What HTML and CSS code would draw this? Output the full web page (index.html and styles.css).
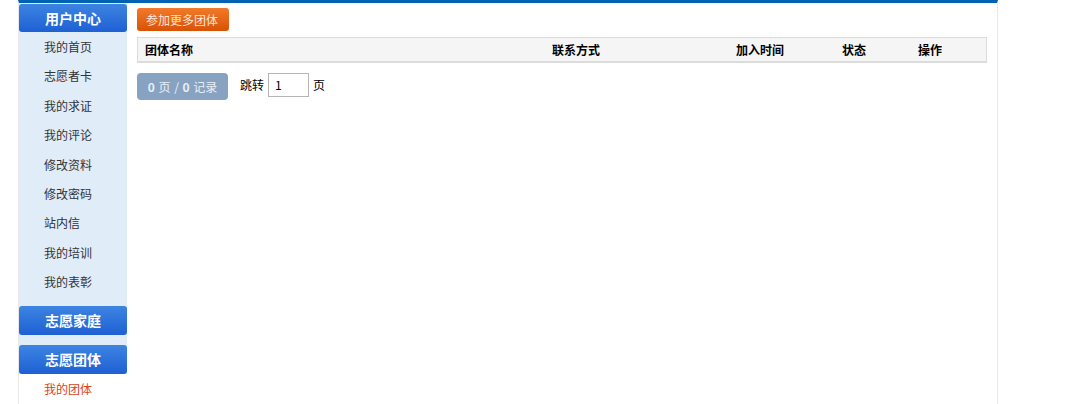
FILE: index.html
```html
<!DOCTYPE html>
<html lang="zh">
<head>
<meta charset="utf-8">
<title>我的团体</title>
<link rel="stylesheet" href="styles.css">
</head>
<body>
<div class="wrap">
  <aside class="side">
    <div class="group">
      <div class="ghead">用户中心</div>
      <ul class="glist">
        <li>我的首页</li>
        <li>志愿者卡</li>
        <li>我的求证</li>
        <li>我的评论</li>
        <li>修改资料</li>
        <li>修改密码</li>
        <li>站内信</li>
        <li>我的培训</li>
        <li>我的表彰</li>
      </ul>
    </div>
    <div class="group">
      <div class="ghead tall">志愿家庭</div>
    </div>
    <div class="group">
      <div class="ghead tall">志愿团体</div>
    </div>
    <ul class="glist white">
      <li class="on">我的团体</li>
    </ul>
  </aside>
  <main class="main">
    <div class="toolbar"><span class="btn">参加更多团体</span></div>
    <div class="thead">
      <div class="c">团体名称</div>
      <div class="c">联系方式</div>
      <div class="c">加入时间</div>
      <div class="c">状态</div>
      <div class="c">操作</div>
    </div>
    <div class="pager">
      <span class="count"><b>0</b> 页 / <b>0</b> 记录</span>
      <span class="jump">跳转</span>
      <span class="inp">1</span>
      <span class="jump">页</span>
    </div>
  </main>
</div>
</body>
</html>
```

FILE: styles.css
```css
html, body {
  margin: 0;
  padding: 0;
  background: #fff;
  font-family: "Noto Sans CJK SC", "Noto Sans", sans-serif;
  font-size: 12px;
  color: #333;
}
.wrap {
  margin-left: 18px;
  width: 978px;
  min-height: 404px;
  border-top: 3px solid #0062b2;
  border-left: 1px solid #e8e8e8;
  border-right: 1px solid #e8e8e8;
  display: flex;
  align-items: flex-start;
}
.side {
  width: 108px;
  flex: none;
  background: #e1ecf9;
  padding-top: 1px;
}
.group + .group {
  padding-top: 9.6px;
}
.ghead {
  height: 28px;
  line-height: 28px;
  text-align: center;
  color: #fff;
  font-weight: bold;
  font-size: 14px;
  border-radius: 3px;
  background: linear-gradient(#3d84e2, #1e60d3);
}
.ghead.tall {
  height: 29px;
  line-height: 29px;
}
.glist {
  list-style: none;
  margin: 0;
  padding: 0;
}
.glist li {
  height: 29.4px;
  line-height: 29.4px;
  padding-left: 25px;
  color: #333;
}
.glist.white {
  background: #fff;
}
.glist li.on {
  color: #d9441b;
}
.main {
  flex: 1;
  padding: 5px 10px 0 10px;
}
.btn {
  display: inline-block;
  height: 23px;
  line-height: 23px;
  padding: 0 9px;
  width: 74px;
  border-radius: 3px;
  background: linear-gradient(#f27a2a, #d95206);
  color: #fde6d8;
  font-size: 12px;
}
.thead {
  margin-top: 6px;
  height: 23px;
  border: 1px solid #dcdcdc;
  border-bottom-width: 2px;
  background: #f5f5f5;
  display: grid;
  grid-template-columns: 407px 184px 106px 76px 1fr;
  align-items: center;
}
.thead .c {
  padding-left: 7px;
  font-weight: bold;
  color: #000;
}
.pager {
  margin-top: 10px;
  display: flex;
  align-items: center;
  height: 27px;
}
.count {
  width: 91px;
  height: 27px;
  line-height: 27px;
  text-align: center;
  border-radius: 4px;
  background: #87a3c1;
  color: #e9eff6;
  font-size: 12px;
  word-spacing: 1px;
}
.count b {
  font-weight: bold;
}
.jump {
  margin-left: 12px;
  color: #000;
  line-height: 24px;
  align-self: flex-start;
}
.inp {
  margin-left: 4px;
  width: 33px;
  height: 22px;
  line-height: 22px;
  padding-left: 6px;
  border: 1px solid #b5b5b5;
  color: #000;
  align-self: flex-start;
}
.inp + .jump {
  margin-left: 4px;
}
```
